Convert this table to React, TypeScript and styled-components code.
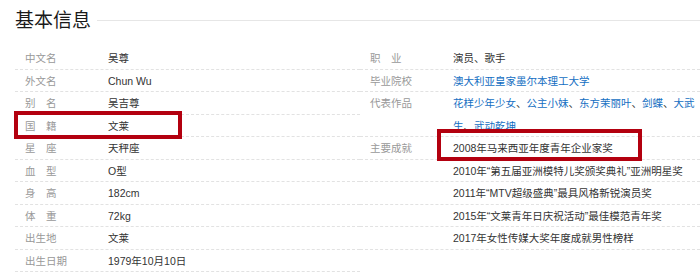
import React from 'react';
import styled, { createGlobalStyle } from 'styled-components';

const GlobalStyle = createGlobalStyle`
  html, body {
    margin: 0;
    padding: 0;
    background: #ffffff;
  }
  body {
    font-family: "Liberation Sans", Arial, "Noto Sans CJK SC", sans-serif;
  }
`;

const Page = styled.div`
  position: relative;
  width: 700px;
  height: 273px;
  overflow: hidden;
  background: #fff;
`;

const Header = styled.div`
  display: flex;
  align-items: center;
  padding: 8px 0 0 15px;
  height: 22px;
`;

const Title = styled.h2`
  margin: 0;
  font-size: 19px;
  line-height: 22px;
  font-weight: normal;
  color: #1a1a1a;
  font-family: "Noto Sans CJK SC", sans-serif;
`;

const TitleRule = styled.div`
  flex: 1;
  margin-left: 6px;
  border-top: 1px solid #e6e6e6;
  transform: translateY(1px);
`;

const Columns = styled.div`
  display: flex;
  margin-top: 17px;
  padding-left: 15px;
`;

const Column = styled.dl<{ $width: number }>`
  margin: 0;
  width: ${({ $width }) => $width}px;
  flex-shrink: 0;
`;

const Row = styled.div<{ $lines: number }>`
  display: flex;
  border-bottom: 1px dashed #e2e2e2;
  box-sizing: border-box;
  height: ${({ $lines }) => $lines * 22.5}px;
  overflow: hidden;
  font-size: 10.5px;
  line-height: 22.5px;
`;

const Label = styled.dt`
  width: 83px;
  padding-left: 10px;
  flex-shrink: 0;
  color: #999;
  white-space: pre;
  height: 22px;
  overflow: hidden;
`;

const Value = styled.dd`
  margin: 0;
  flex: 1;
  color: #333;
`;

const Line = styled.div`
  height: 22.5px;
  white-space: nowrap;
  overflow: hidden;
`;

const Link = styled.a`
  color: #136ec2;
  text-decoration: none;
`;

const Highlight = styled.div<{ $top: number; $left: number; $w: number; $h: number }>`
  position: absolute;
  top: ${({ $top }) => $top}px;
  left: ${({ $left }) => $left}px;
  width: ${({ $w }) => $w}px;
  height: ${({ $h }) => $h}px;
  border: 4.5px solid #b3000f;
  box-sizing: border-box;
  pointer-events: none;
`;

type Item = { label: string; lines: React.ReactNode[] };

const left: Item[] = [
  { label: '中文名', lines: ['吴尊'] },
  { label: '外文名', lines: ['Chun Wu'] },
  { label: '别\u3000名', lines: ['吴吉尊'] },
  { label: '国\u3000籍', lines: ['文莱'] },
  { label: '星\u3000座', lines: ['天秤座'] },
  { label: '血\u3000型', lines: ['O型'] },
  { label: '身\u3000高', lines: ['182cm'] },
  { label: '体\u3000重', lines: ['72kg'] },
  { label: '出生地', lines: ['文莱'] },
  { label: '出生日期', lines: ['1979年10月10日'] },
];

const right: Item[] = [
  { label: '职\u3000业', lines: ['演员、歌手'] },
  { label: '毕业院校', lines: [<Link href="#">澳大利亚皇家墨尔本理工大学</Link>] },
  {
    label: '代表作品',
    lines: [
      <>
        <Link href="#">花样少年少女</Link>、<Link href="#">公主小妹</Link>、
        <Link href="#">东方茉丽叶</Link>、<Link href="#">剑蝶</Link>、<Link href="#">大武</Link>
      </>,
      <>
        <Link href="#">生</Link>、<Link href="#">武动乾坤</Link>
      </>,
    ],
  },
  { label: '主要成就', lines: ['2008年马来西亚年度青年企业家奖'] },
  { label: '', lines: ['2010年“第五届亚洲模特儿奖颁奖典礼”亚洲明星奖'] },
  { label: '', lines: ['2011年“MTV超级盛典”最具风格新锐演员奖'] },
  { label: '', lines: ['2015年“文莱青年日庆祝活动”最佳模范青年奖'] },
  { label: '', lines: ['2017年女性传媒大奖年度成就男性榜样'] },
];

function InfoColumn({ items, width }: { items: Item[]; width: number }) {
  return (
    <Column $width={width}>
      {items.map((item, i) => (
        <Row key={i} $lines={item.lines.length}>
          <Label>{item.label}</Label>
          <Value>
            {item.lines.map((line, j) => (
              <Line key={j}>{line}</Line>
            ))}
          </Value>
        </Row>
      ))}
    </Column>
  );
}

export default function App() {
  return (
    <>
      <GlobalStyle />
      <Page>
        <Header>
          <Title>基本信息</Title>
          <TitleRule />
        </Header>
        <Columns>
          <InfoColumn items={left} width={345} />
          <InfoColumn items={right} width={340} />
        </Columns>
        <Highlight $top={111} $left={14} $w={168} $h={28} />
        <Highlight $top={129} $left={437} $w={205} $h={32} />
      </Page>
    </>
  );
}
